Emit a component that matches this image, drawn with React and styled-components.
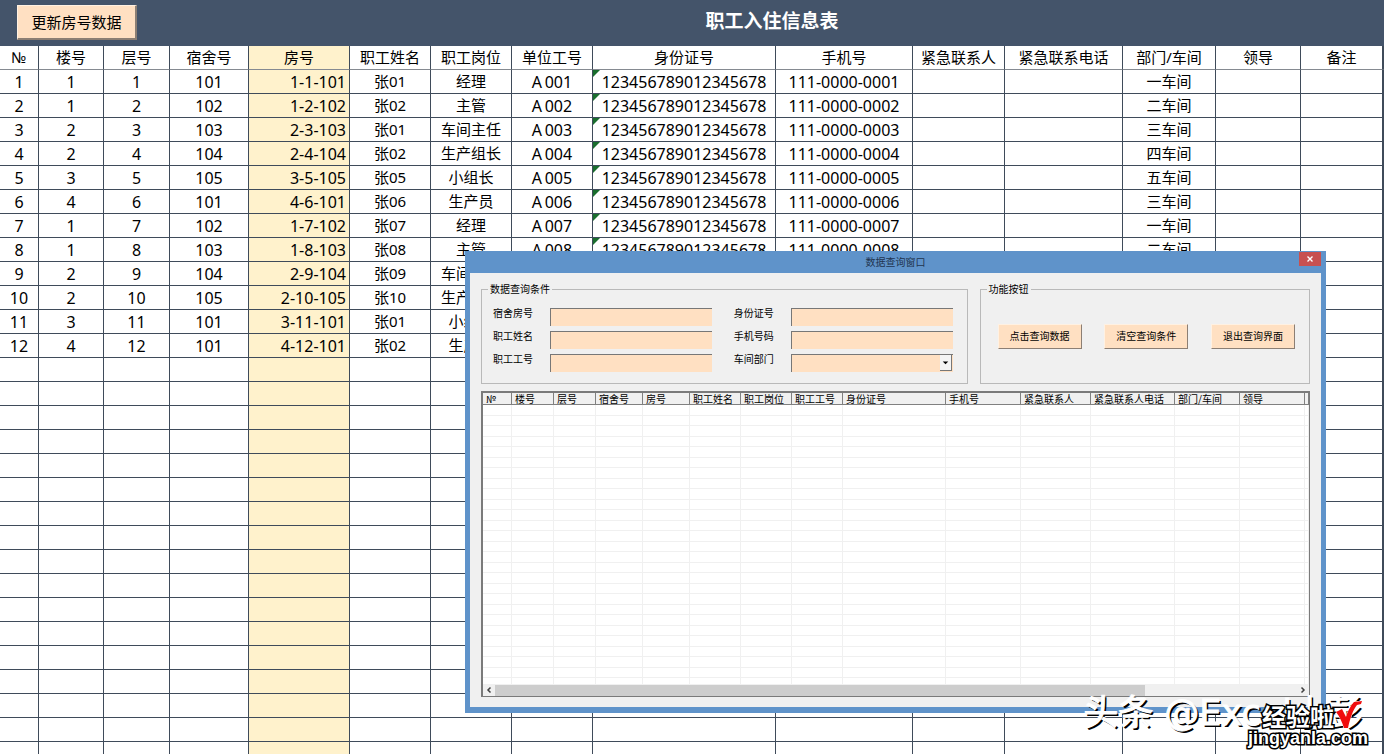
import React from "react";
import styled, { createGlobalStyle } from "styled-components";

const GlobalStyle = createGlobalStyle`
  * { box-sizing: border-box; }
  body {
    margin: 0;
    background: #fff;
    color: #000;
    font-family: "Noto Sans CJK SC", sans-serif;
  }
  button, input, select { font-family: inherit; }
`;

const Page = styled.main`
  position: relative;
  height: 100vh;
  overflow: hidden;
`;

const Banner = styled.header`
  display: flex;
  height: 46px;
  background: #44546a;
`;

const BannerTools = styled.div`
  width: 160px;
  padding: 5px 0 0 17px;
`;

const RaisedButton = styled.button`
  padding: 0 0 2px;
  border: 1px solid;
  border-color: #fff1e2 #8c7f74 #8c7f74 #fff1e2;
  background: #ffe0c2;
  color: #000;
  white-space: nowrap;
`;

const UpdateButton = styled(RaisedButton)`
  width: 120px;
  height: 35px;
  border-width: 1px 2px 2px 1px;
  font-size: 15px;
`;

const Title = styled.h1`
  flex: 1;
  margin: 0;
  color: #fff;
  font-size: 19px;
  font-weight: 700;
  line-height: 40px;
  text-align: center;
`;

const Sheet = styled.table`
  width: 100%;
  table-layout: fixed;
  border-collapse: separate;
  border-spacing: 0;
`;

const Column = styled.col`
  width: ${(p) => p.$width}px;
`;

const HeadCell = styled.th`
  height: 24px;
  padding: 0;
  border-right: 1px solid #3f4b5a;
  border-bottom: 1px solid #858a91;
  background: ${(p) => (p.$accent ? "#fff2cc" : "#fff")};
  font-family: "Noto Sans", "Noto Sans CJK SC", sans-serif;
  font-size: 15px;
  font-weight: 400;
  line-height: 23px;
  white-space: nowrap;
`;

const Cell = styled.td`
  position: relative;
  height: 24px;
  padding: ${(p) => (p.$numeric ? 2 : 0)}px ${(p) => (p.$accent ? 3 : 0)}px 0 0;
  border-right: 1px solid #3f4b5a;
  border-bottom: 1px solid #3f4b5a;
  background: ${(p) => (p.$accent ? "#fff2cc" : "#fff")};
  font-family: "Noto Sans", "Noto Sans CJK SC", sans-serif;
  font-size: ${(p) => (p.$numeric ? 16 : 15)}px;
  line-height: ${(p) => (p.$numeric ? 21 : 23)}px;
  text-align: ${(p) => (p.$accent ? "right" : "center")};
  white-space: nowrap;
`;

const TextFlag = styled.span`
  position: absolute;
  top: 0;
  left: 0;
  border-top: 7px solid #1a6e2e;
  border-right: 7px solid transparent;
`;

const Dialog = styled.section`
  position: absolute;
  top: 251px;
  left: 465px;
  right: 58px;
  padding: 0 5px 6px;
  background: #5f93ca;
  font-size: 10px;
`;

const TitleBar = styled.div`
  position: relative;
  height: 22px;
`;

const DialogTitle = styled.h2`
  margin: 0;
  color: #1f3550;
  font-size: 10px;
  font-weight: 400;
  line-height: 22px;
  text-align: center;
`;

const CloseButton = styled.button`
  position: absolute;
  top: 1px;
  right: 0;
  display: grid;
  place-items: center;
  width: 22px;
  height: 14px;
  padding: 0;
  border: 0;
  background: #c75050;
`;

const DialogBody = styled.div`
  padding: 10px 11px;
  background: #f0f0f0;
`;

const Groups = styled.div`
  display: flex;
  gap: 12px;
  margin-bottom: 7px;
`;

const Group = styled.fieldset`
  flex: ${(p) => p.$grow} 1 0;
  min-width: 0;
  height: 101px;
  margin: 0;
  padding: 0;
  border: 1px solid #b9b9b9;
`;

const Legend = styled.legend`
  margin-left: 6px;
  padding: 0 2px;
  line-height: 12px;
`;

const Fields = styled.div`
  display: grid;
  grid-template-columns: 1fr 1fr;
  gap: 5px 22px;
  padding: 13px 14px 0 11px;
`;

const Field = styled.div`
  display: grid;
  grid-template-columns: 57px 1fr;
  align-items: start;
`;

const Label = styled.label`
  line-height: 10px;
`;

const TextBox = styled.input`
  width: 100%;
  height: 18px;
  padding: 0 3px;
  border: 0 solid #777;
  border-top-width: 1px;
  border-left-width: 1px;
  border-radius: 0;
  background: #ffe0c2;
  font-size: 10px;
`;

const SelectWrap = styled.div`
  position: relative;
`;

const Select = styled(TextBox).attrs({ as: "select" })`
  appearance: none;
  display: block;
`;

const SelectArrow = styled.svg`
  position: absolute;
  top: 1px;
  right: 1px;
  border-right: 1px solid #777;
  border-bottom: 1px solid #777;
  background: #f4f4f4;
  pointer-events: none;
`;

const Actions = styled.div`
  display: flex;
  justify-content: space-between;
  padding: 29px 14px 0 17px;
`;

const ActionButton = styled(RaisedButton)`
  width: 84px;
  height: 25px;
  font-size: 10px;
`;

const ListFrame = styled.div`
  border: solid #7a7a7a;
  border-width: 2px 1px 1px 2px;
  background: #fff;
`;

const ListView = styled.div`
  height: 291px;
  overflow: hidden;
`;

const ListHead = styled.th`
  height: 12px;
  padding: 0 0 0 3px;
  border-right: 1px solid #808080;
  border-bottom: 1px solid #808080;
  background: #f0f0f0;
  font-weight: 400;
  font-size: 10px;
  line-height: 11px;
  text-align: left;
  white-space: nowrap;
`;

const ListRow = styled.tr`
  height: 10px;
  &:nth-child(odd) { height: 11px; }
`;

const ListCell = styled.td`
  padding: 0;
  border-right: 1px solid #f0f0f0;
  border-bottom: 1px solid #f0f0f0;
`;

const ScrollBar = styled.div`
  display: flex;
  align-items: center;
  height: 12px;
  background: #f0f0f0;
`;

const ScrollTrack = styled.div`
  flex: 1;
  height: 11px;
`;

const ScrollThumb = styled.div`
  width: 81%;
  height: 100%;
  background: #cdcdcd;
`;

const Credit = styled.div`
  position: absolute;
  right: 22px;
  bottom: 15px;
  color: #fff;
  font-family: "DejaVu Sans", "Noto Sans CJK SC", sans-serif;
  font-size: 35px;
  line-height: 52px;
  text-shadow: 2px 2px 0 #000;
  -webkit-text-stroke: 1px #fff;
  white-space: nowrap;
`;

const SiteMark = styled.div`
  position: absolute;
  right: 16px;
  bottom: 6px;
  color: #fff;
  font-weight: 700;
  text-align: right;
  -webkit-text-stroke: 3px #000;
  paint-order: stroke fill;
`;

const SiteName = styled.div`
  display: flex;
  justify-content: flex-end;
  align-items: center;
  gap: 1px;
  height: 26px;
  padding-right: 5px;
  font-size: 24px;
`;

const SiteUrl = styled.div`
  font-family: "Liberation Sans", sans-serif;
  font-size: 18px;
  line-height: 20px;
`;

const sheetColumns = [
  ["№", 39], ["楼号", 65], ["层号", 66], ["宿舍号", 79], ["房号", 101],
  ["职工姓名", 81], ["职工岗位", 81], ["单位工号", 81], ["身份证号", 183],
  ["手机号", 137], ["紧急联系人", 92], ["紧急联系电话", 118],
  ["部门/车间", 93], ["领导", 85], ["备注", 82], ["", 1],
];

const staff = [
  [1, 1, 101, "张01", "经理", "一车间"],
  [1, 2, 102, "张02", "主管", "二车间"],
  [2, 3, 103, "张01", "车间主任", "三车间"],
  [2, 4, 104, "张02", "生产组长", "四车间"],
  [3, 5, 105, "张05", "小组长", "五车间"],
  [4, 6, 101, "张06", "生产员", "三车间"],
  [1, 7, 102, "张07", "经理", "一车间"],
  [1, 8, 103, "张08", "主管", "二车间"],
  [2, 9, 104, "张09", "车间主任", "三车间"],
  [2, 10, 105, "张10", "生产组长", "四车间"],
  [3, 11, 101, "张01", "小组长", "五车间"],
  [4, 12, 101, "张02", "生产员", "三车间"],
].map(([building, floor, room, name, post, dept], i) => {
  const serial = String(i + 1).padStart(3, "0");
  return [
    i + 1, building, floor, room, `${building}-${floor}-${room}`, name, post,
    `A\u2009${serial}`, "123456789012345678", `111-0000-0${serial}`,
    "", "", dept, "", "", "",
  ];
});

const blankRows = Array.from({ length: 24 }, () => sheetColumns.map(() => ""));
const sheetRows = [...staff, ...blankRows];
const ROOM = 4;
const ID_CARD = 8;
const cjkColumns = [5, 6, 12];

const listColumns = [
  ["№", 29], ["楼号", 42], ["层号", 42], ["宿舍号", 47], ["房号", 47],
  ["职工姓名", 51], ["职工岗位", 51], ["职工工号", 51], ["身份证号", 103],
  ["手机号", 75], ["紧急联系人", 70], ["紧急联系人电话", 84],
  ["部门/车间", 65], ["领导", 65], ["", 4],
];

const fields = [
  ["room", "宿舍房号"], ["idcard", "身份证号"],
  ["name", "职工姓名"], ["phone", "手机号码"],
  ["staffno", "职工工号"], ["dept", "车间部门"],
];

function QueryField({ id, label }) {
  return (
    <Field>
      <Label htmlFor={id}>{label}</Label>
      {id === "dept" ? (
        <SelectWrap>
          <Select id={id} defaultValue=""><option value="" /></Select>
          <SelectArrow width="12" height="16" viewBox="0 0 12 16" aria-hidden="true">
            <path d="M3 7h6L6 10z" fill="#000" />
          </SelectArrow>
        </SelectWrap>
      ) : (
        <TextBox id={id} type="text" />
      )}
    </Field>
  );
}

function ScrollArrow({ d }) {
  return (
    <svg width="12" height="12" viewBox="0 0 12 12" aria-hidden="true">
      <path d={d} fill="none" stroke="#404040" strokeWidth="1.500" />
    </svg>
  );
}

function QueryDialog() {
  return (
    <Dialog role="dialog" aria-labelledby="query-title">
      <TitleBar>
        <DialogTitle id="query-title">数据查询窗口</DialogTitle>
        <CloseButton type="button" aria-label="关闭">
          <svg width="6" height="6" viewBox="0 0 6 6">
            <path d="M.5.5l5 5M5.500.5l-5 5" stroke="#fff" strokeWidth="1.400" />
          </svg>
        </CloseButton>
      </TitleBar>
      <DialogBody>
        <Groups>
          <Group $grow={487}>
            <Legend>数据查询条件</Legend>
            <Fields>
              {fields.map(([id, label]) => <QueryField key={id} id={id} label={label} />)}
            </Fields>
          </Group>
          <Group $grow={330}>
            <Legend>功能按钮</Legend>
            <Actions>
              <ActionButton type="button">点击查询数据</ActionButton>
              <ActionButton type="button">清空查询条件</ActionButton>
              <ActionButton type="button">退出查询界面</ActionButton>
            </Actions>
          </Group>
        </Groups>
        <ListFrame>
          <ListView>
            <Sheet>
              <colgroup>
                {listColumns.map(([, w], i) => <Column key={i} $width={w} />)}
              </colgroup>
              <thead>
                <tr>{listColumns.map(([t], i) => <ListHead key={i}>{t}</ListHead>)}</tr>
              </thead>
              <tbody>
                {Array.from({ length: 27 }, (_, r) => (
                  <ListRow key={r}>
                    {listColumns.map((_, c) => <ListCell key={c} />)}
                  </ListRow>
                ))}
              </tbody>
            </Sheet>
          </ListView>
          <ScrollBar>
            <ScrollArrow d="M7.500 3.500L5 6l2.500 2.500" />
            <ScrollTrack><ScrollThumb /></ScrollTrack>
            <ScrollArrow d="M4.500 3.500L7 6l-2.500 2.500" />
          </ScrollBar>
        </ListFrame>
      </DialogBody>
    </Dialog>
  );
}

export default function App() {
  return (
    <Page>
      <GlobalStyle />
      <Banner>
        <BannerTools>
          <UpdateButton type="button">更新房号数据</UpdateButton>
        </BannerTools>
        <Title>职工入住信息表</Title>
      </Banner>
      <Sheet>
        <colgroup>
          {sheetColumns.map(([, w], i) => <Column key={i} $width={w} />)}
        </colgroup>
        <thead>
          <tr>
            {sheetColumns.map(([t], i) => (
              <HeadCell key={i} $accent={i === ROOM}>{t}</HeadCell>
            ))}
          </tr>
        </thead>
        <tbody>
          {sheetRows.map((row, r) => (
            <tr key={r}>
              {row.map((value, c) => (
                <Cell key={c} $accent={c === ROOM} $numeric={!cjkColumns.includes(c)}>
                  {c === ID_CARD && value && <TextFlag />}
                  {value}
                </Cell>
              ))}
            </tr>
          ))}
        </tbody>
      </Sheet>
      <QueryDialog />
      <Credit>头条 @Excel小彭</Credit>
      <SiteMark>
        <SiteName>
          经验啦
          <svg width="28" height="28" viewBox="0 0 28 28" aria-hidden="true">
            <path d="M1 11l6-3 4 8C13 9 17 3 19 1l8-1-1 3-4 1C18 9 15 17 13 27h-4C7 21 5 16 1 11z" fill="#f00d0d" stroke="#fff" strokeWidth="1" />
          </svg>
        </SiteName>
        <SiteUrl>jingyanla.com</SiteUrl>
      </SiteMark>
    </Page>
  );
}
